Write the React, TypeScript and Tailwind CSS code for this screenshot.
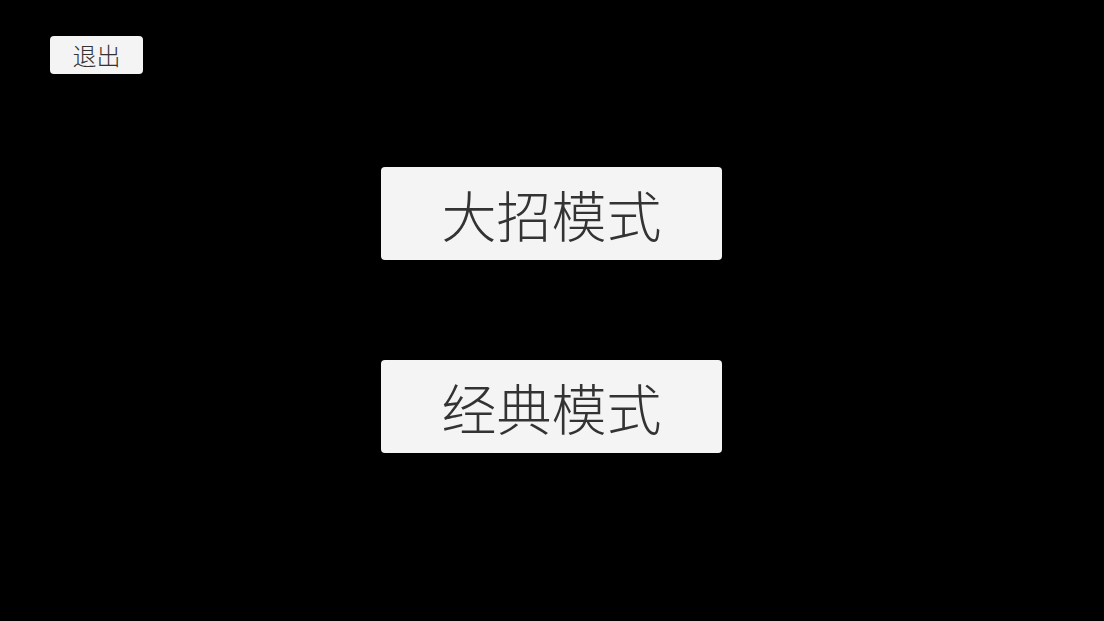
export default function App() {
  const modes = ["大招模式", "经典模式"];

  return (
    <div
      className="h-[621px] w-full bg-black pt-[36px] pl-[50px]"
      style={{ fontFamily: '"Noto Sans CJK SC", "Noto Sans", sans-serif' }}
    >
      <button className="flex h-[38px] w-[93px] items-center justify-center rounded-[4px] bg-[#f4f4f4] text-[24px] font-light leading-none text-[#333333]">
        退出
      </button>

      <div className="mt-[93px] flex flex-col items-center gap-[100px] pr-[51px]">
        {modes.map((m) => (
          <button
            key={m}
            className="flex h-[93px] w-[341px] items-center justify-center rounded-[4px] bg-[#f4f4f4] text-[55px] font-light leading-none text-[#333333]"
          >
            {m}
          </button>
        ))}
      </div>
    </div>
  );
}
